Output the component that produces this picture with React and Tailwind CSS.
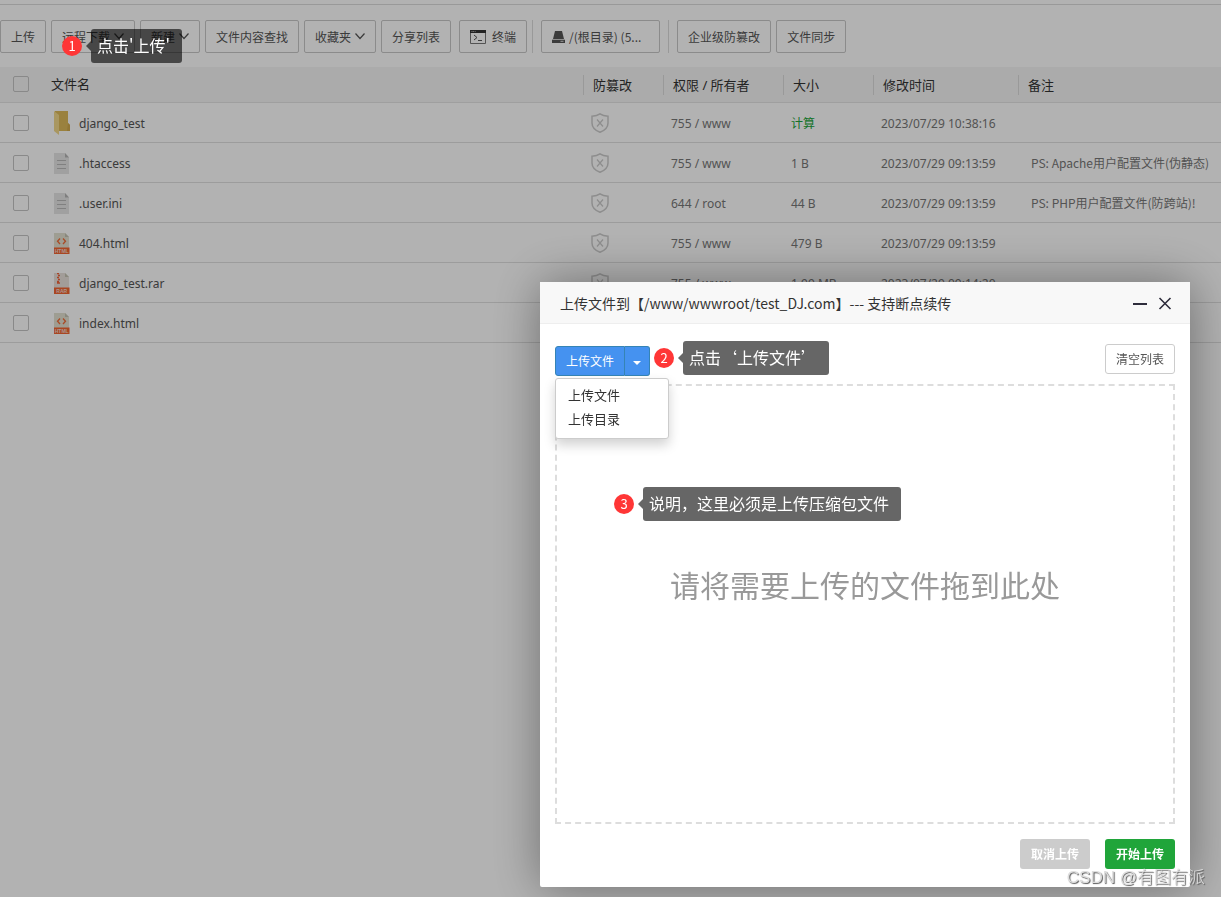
import { useState } from 'react';

const files = [
  { name: 'django_test', type: 'folder', owner: '755 / www', size: '', time: '2023/07/29 10:38:16', note: '' },
  { name: '.htaccess', type: 'text', owner: '755 / www', size: '1 B', time: '2023/07/29 09:13:59', note: 'PS: Apache用户配置文件(伪静态)' },
  { name: '.user.ini', type: 'text', owner: '644 / root', size: '44 B', time: '2023/07/29 09:13:59', note: 'PS: PHP用户配置文件(防跨站)!' },
  { name: '404.html', type: 'html', owner: '755 / www', size: '479 B', time: '2023/07/29 09:13:59', note: '' },
  { name: 'django_test.rar', type: 'rar', owner: '755 / www', size: '1.99 MB', time: '2023/07/29 09:14:20', note: '' },
  { name: 'index.html', type: 'html', owner: '', size: '', time: '', note: '' },
];

function Chevron() {
  return (
    <svg className="ml-1 h-[10px] w-[10px]" viewBox="0 0 10 10" fill="none" stroke="currentColor">
      <path d="M.5 1.500 5 6.500l4.500-5" strokeWidth="1.200" />
    </svg>
  );
}

function ShieldIcon() {
  return (
    <svg className="h-5 w-[18px]" viewBox="0 0 18 20" fill="none" stroke="#cbcbcb">
      <path d="M9 .8C6.800 2.300 4 3 1 3.200V10c0 4.500 3.500 7.500 8 9.200 4.500-1.700 8-4.700 8-9.200V3.200C14 3 11.200 2.300 9 .8Z" strokeWidth="1.500" />
      <path d="m6 6.500 6 7M12 6.500l-6 7" strokeWidth="1.200" />
    </svg>
  );
}

function FileIcon({ type }) {
  if (type === 'folder') {
    return (
      <svg className="h-6 w-4" viewBox="0 0 16 24">
        <path d="M1 0h13v12l2 2v6H1Z" fill="#ddb95a" />
        <path d="M14 12l2 2v6h-3Z" fill="#d0a94c" />
        <path d="M0 0l5 4v20l-5-4Z" fill="#f3d98c" />
      </svg>
    );
  }
  if (type === 'text') {
    return (
      <svg className="h-[21px] w-4" viewBox="0 0 16 21">
        <path d="M0 0h11l4 4.500V21H0Z" fill="#e6e6e6" />
        <path d="M11 0l4 4.500h-4Z" fill="#b5b5b5" />
        <path d="M3 7.500h9M3 11.500h9M3 15.500h9" stroke="#b8b8b8" />
      </svg>
    );
  }
  return (
    <svg className="h-[21px] w-4" viewBox="0 0 16 21">
      <path d="M0 0h11l4 4v11H0Z" fill={type === 'html' ? '#e3e1d2' : '#e9e1dc'} />
      <path d="M11 0l4 4h-4Z" fill="#c5c3b4" />
      {type === 'html' ? (
        <path d="M6 5.500 3.500 8.200 6 11M9 5.500l2.500 2.700L9 11" fill="none" stroke="#f26c38" strokeWidth="1.300" />
      ) : (
        <path d="M3 .5h2M4 2.500h2M3 4.500h2M4 6.500h2M3 8.500h2M3 10h3" stroke="#f0643a" strokeWidth="1.400" />
      )}
      <path d="M0 14.500h15.500V21H0Z" fill="#f26532" />
      <text x="7.700" y="19.700" fontSize="5" fontWeight="bold" textAnchor="middle" fill="#f5d8cb" fontFamily="Liberation Sans, sans-serif">
        {type.toUpperCase()}
      </text>
    </svg>
  );
}

function ToolButton({ children, className = '' }) {
  return (
    <button
      type="button"
      className={`flex h-[33px] shrink-0 items-center whitespace-nowrap rounded-[2px] border border-[#c8c8c8] px-[10px] text-xs text-[#555] ${className}`}
    >
      {children}
    </button>
  );
}

function CheckBox({ label }) {
  return (
    <input
      type="checkbox"
      aria-label={label}
      className="block h-4 w-4 appearance-none rounded-[2px] border border-[#c4c4c4] checked:bg-[#20a53a]"
    />
  );
}

function HeadCell({ children }) {
  return (
    <th className="p-0 pt-px text-left font-normal">
      <div className="border-l border-[#dcdcdc] pl-[9px] leading-5">{children}</div>
    </th>
  );
}

function Callout({ step, children, className = '' }) {
  return (
    <div className={`absolute flex items-center whitespace-nowrap ${className}`}>
      <span className="flex h-5 w-5 items-center justify-center rounded-full bg-[#ff3636] text-[13px] leading-5 text-white">
        {step}
      </span>
      <span className="ml-1 border-y-[5px] border-r-[5px] border-y-transparent border-r-black/60" />
      <span lang="zh-CN" className="rounded-[3px] bg-black/60 pt-1 pb-[6px] pl-[6px] pr-3 font-['Noto_Sans_CJK_SC',sans-serif] text-base leading-6 text-white">
        {children}
      </span>
    </div>
  );
}

function Toolbar() {
  return (
    <div className="flex gap-[5px] pt-[15px] pb-[14px]">
      <ToolButton>上传</ToolButton>
      <ToolButton>远程下载<Chevron /></ToolButton>
      <ToolButton>新建<Chevron /></ToolButton>
      <ToolButton>文件内容查找</ToolButton>
      <ToolButton>收藏夹<Chevron /></ToolButton>
      <ToolButton>分享列表</ToolButton>
      <div className="flex gap-[5px] pl-[3px]">
        <ToolButton className="h-8">
          <svg className="mr-[6px] h-[14px] w-4" viewBox="0 0 16 14">
            <path d="M.5.500h15v13H.5Z" fill="none" stroke="#777" />
            <path d="M0 0h16v3H0Z" fill="#333" />
            <path d="M1.500 1.500h4" stroke="#bbb" strokeDasharray="1 .7" />
            <path d="m4 5 3 2.500L4 10M8 10.500h4" fill="none" stroke="#555" />
          </svg>
          终端
        </ToolButton>
        <div className="border-l border-[#dcdcdc]" />
      </div>
      <div className="flex gap-2 pl-[3px]">
        <ToolButton className="w-[119px]">
          <svg className="mr-1 h-3 w-[13px] shrink-0" viewBox="0 0 13 12" fill="#555">
            <path d="M3 0h7l2 8H1Z" />
            <path d="M0 8.700h13V12H0Z" />
            <path d="M8.500 10.300h3" stroke="#fff" strokeWidth=".8" />
          </svg>
          /(根目录) (5...
        </ToolButton>
        <div className="border-l border-[#dcdcdc]" />
      </div>
      <div className="flex gap-[5px] pl-[3px]">
        <ToolButton>企业级防篡改</ToolButton>
        <ToolButton>文件同步</ToolButton>
      </div>
    </div>
  );
}

function FileTable() {
  return (
    <table className="w-full table-fixed border-collapse font-['Noto_Sans','Noto_Sans_CJK_SC',sans-serif] text-xs">
      <colgroup>
        <col className="w-[51px]" />
        <col />
        <col className="w-20" />
        <col className="w-[120px]" />
        <col className="w-[90px]" />
        <col className="w-[145px]" />
        <col className="w-[203px]" />
      </colgroup>
      <thead>
        <tr className="h-[35px] border-b border-[#e4e4e4] bg-[#f5f5f5] text-[13px] text-[#333]">
          <th className="p-0 pl-[13px]"><CheckBox label="全选" /></th>
          <th className="p-0 pt-px text-left font-normal">文件名</th>
          <HeadCell>防篡改</HeadCell>
          <HeadCell>权限 / 所有者</HeadCell>
          <HeadCell>大小</HeadCell>
          <HeadCell>修改时间</HeadCell>
          <HeadCell>备注</HeadCell>
        </tr>
      </thead>
      <tbody>
        {files.map((file) => (
          <tr key={file.name} className="h-10 border-b border-[#e0e0e0] text-[#777]">
            <td className="p-0 pt-[2px] pl-[13px]"><CheckBox label={file.name} /></td>
            <td className="p-0 pt-[2px] text-[#555]">
              <div className="flex items-center pl-[3px]">
                <FileIcon type={file.type} />
                <span className="ml-[9px] pt-[2px]">{file.name}</span>
              </div>
            </td>
            <td className="p-0 pt-[2px] pl-2"><ShieldIcon /></td>
            <td className="p-0 pt-1 pl-2">{file.owner}</td>
            <td className="p-0 pt-1 pl-2">
              {file.type === 'folder' ? (
                <button type="button" className="block text-[#20a53a]">计算</button>
              ) : (
                file.size
              )}
            </td>
            <td className="p-0 pt-1 pl-2">{file.time}</td>
            <td className="whitespace-nowrap p-0 pt-[2px] pl-[13px] font-['Noto_Sans_CJK_SC',sans-serif]">{file.note}</td>
          </tr>
        ))}
      </tbody>
    </table>
  );
}

function UploadDialog() {
  const [menuOpen, setMenuOpen] = useState(true);

  return (
    <section
      role="dialog"
      aria-labelledby="upload-title"
      className="relative w-full max-w-[650px] rounded-[2px] bg-white shadow-[1px_1px_50px_rgba(0,0,0,0.4)]"
    >
      <header className="flex h-[42px] items-center justify-between border-b border-[#eee] bg-[#f8f8f8] pl-5 pr-[18px]">
        <h2 id="upload-title" className="text-sm text-[#333]">
          上传文件到【/www/wwwroot/test_DJ.com】--- 支持断点续传
        </h2>
        <div className="flex gap-[11px] text-[#2e2d3c]">
          <button type="button" aria-label="最小化">
            <svg className="h-[14px] w-[14px]" viewBox="0 0 14 14" stroke="currentColor" strokeWidth="2">
              <path d="M0 8h14" />
            </svg>
          </button>
          <button type="button" aria-label="关闭">
            <svg className="h-[14px] w-[14px]" viewBox="0 0 14 14" stroke="currentColor" strokeWidth="1.600">
              <path d="m1.500 2 11 11M12.500 2l-11 11" />
            </svg>
          </button>
        </div>
      </header>

      <div className="px-[15px] pt-5 pb-[18px]">
        <div className="flex h-10 items-start justify-between">
          <div className="relative flex pt-[2px] text-xs text-white">
            <button type="button" className="h-[30px] w-[70px] rounded-l-[3px] border border-[#3584b5] bg-[#4592f0]">
              上传文件
            </button>
            <button
              type="button"
              aria-label="更多上传方式"
              onClick={() => setMenuOpen(!menuOpen)}
              className="flex h-[30px] w-[25px] items-center justify-center rounded-r-[3px] border border-l-0 border-[#3584b5] bg-[#4592f0] pt-1"
            >
              <span className="border-x-4 border-t-4 border-x-transparent border-t-white" />
            </button>
            {menuOpen && (
              <ul className="absolute top-[34px] left-0 z-10 w-[114px] rounded-[3px] border border-[#ccc] bg-white pt-1 pb-[7px] text-[13px] leading-6 text-[#333] shadow-[0_6px_12px_rgba(0,0,0,0.18)]">
                <li><button type="button" className="block w-full px-3 text-left">上传文件</button></li>
                <li><button type="button" className="block w-full px-3 text-left">上传目录</button></li>
              </ul>
            )}
          </div>
          <button type="button" className="h-[30px] w-[70px] rounded-[3px] border border-[#ccc] bg-white text-xs text-[#555]">
            清空列表
          </button>
        </div>

        <div className="flex h-[440px] items-center justify-center border-2 border-dashed border-[#ddd] pb-10">
          <span className="text-3xl text-[#999]">请将需要上传的文件拖到此处</span>
        </div>

        <div className="mt-[15px] flex justify-end gap-[15px] text-xs font-bold text-white">
          <button type="button" className="h-[30px] w-[70px] rounded-[3px] bg-[#ccc]">取消上传</button>
          <button type="button" className="h-[30px] w-[70px] rounded-[3px] bg-[#20a53a]">开始上传</button>
        </div>
      </div>

      <Callout step={2} className="top-[59px] left-[114px]">点击‘上传文件’</Callout>
      <Callout step={3} className="top-[205px] left-[74px]">说明，这里必须是上传压缩包文件</Callout>
    </section>
  );
}

export default function App() {
  return (
    <div lang="zh-CN" className="min-h-screen bg-white font-['Noto_Sans_CJK_SC',sans-serif]">
      <div className="pt-1">
        <div className="border-t border-[#dcdcdc]">
          <Toolbar />
          <FileTable />
        </div>
      </div>

      {/* Mask */}
      <div className="fixed inset-0 flex items-end justify-end bg-black/30 pr-[31px] pb-[10px]">
        <UploadDialog />
      </div>

      <Callout step={1} className="top-[29px] left-[62px]">点击'上传'</Callout>

      {/* Watermark */}
      <p className="fixed right-4 bottom-[7px] font-['Liberation_Sans','Noto_Sans_CJK_SC',sans-serif] text-[17px] leading-6 font-light text-[#ddd] [text-shadow:1px_1px_1px_#555]">
        CSDN @有图有派
      </p>
    </div>
  );
}
